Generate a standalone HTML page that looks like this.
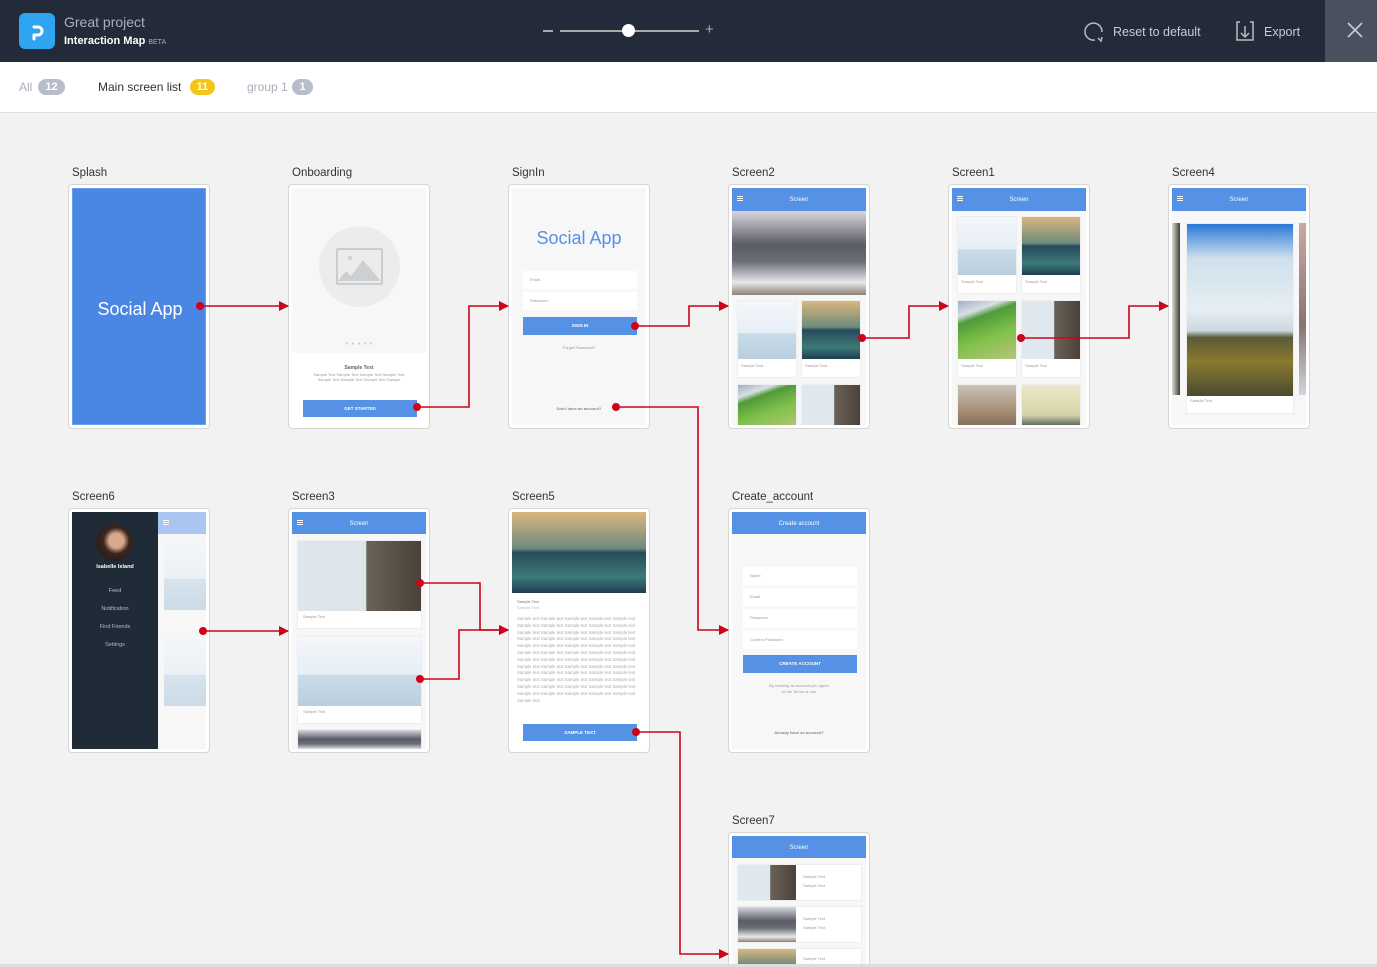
<!DOCTYPE html>
<html style="width:1377px;height:967px;overflow:hidden"><head><meta charset="utf-8"><style>
*{box-sizing:border-box;margin:0;padding:0}
body{width:1377px;height:967px;overflow:hidden;background:#f2f2f2;font-family:"Liberation Sans",sans-serif;position:relative}
.hdr{position:absolute;left:0;top:0;width:1377px;height:62px;background:#232a3a}
.tabs{position:absolute;left:0;top:62px;width:1377px;height:51px;background:#fff;border-bottom:1px solid #ddd}
.a{position:absolute}
.lbl{position:absolute;font-size:11.5px;color:#333}
.card{position:absolute;width:142px;height:245px;background:#fff;border:1px solid #d6d6d6;border-radius:4px;overflow:hidden}
.in{position:absolute;left:3px;top:3px;width:134px;height:237px;background:#f7f7f7;overflow:hidden}
.bar{position:absolute;left:0;top:0;width:134px;height:22px;background:#5591e4;color:#fff;font-size:6px;text-align:center;line-height:24px}
.ham{position:absolute;left:5px;top:8px;width:6px;height:1px;background:#fff;box-shadow:0 2px 0 #fff,0 4px 0 #fff}
.t{position:absolute;font-size:4px;color:#999}
.btn{position:absolute;background:#5591e4;color:#fff;font-size:4.5px;font-weight:bold;text-align:center}
.fld{position:absolute;background:#fff;font-size:4px;color:#999;padding-left:7px}
.tile{position:absolute;background:#fff;border:1px solid #eee}
.sky{background:linear-gradient(#f4f7fa,#e6eef6 55%,#c9dbe9 56%,#b9cfe0)}
.sea{background:linear-gradient(#d9b77f,#6e8a7c 45%,#274b5a 50%,#3d7a78 80%,#1d3d52)}
.hill{background:linear-gradient(160deg,#9fb0c4 0%,#d9dfe4 20%,#4f9a3a 30%,#7fc14a 60%,#b8c47a)}
.city{background:linear-gradient(#d9d6de 0%,#5a5c66 40%,#6b6e78 60%,#e8e8ea 85%,#8e8276)}
.pier{background:linear-gradient(90deg,#dfe8ef 55%,#6a6258 56%,#4a4238)}
</style></head><body>
<div class="hdr">
 <div class="a" style="left:19px;top:13px;width:36px;height:36px;border-radius:6px;background:#2fa4f0"></div>
 <svg class="a" style="left:19px;top:13px" width="36" height="36"><path d="M15 26 L15 24 M15 14 h4 a4 4 0 0 1 0 8 h-4" stroke="#fff" stroke-width="3" fill="none" stroke-linecap="round"/></svg>
 <div class="a" style="left:64px;top:14px;font-size:14px;color:#a9afbd">Great project</div>
 <div class="a" style="left:64px;top:35px;font-size:11px;color:#fff;font-weight:bold">Interaction Map <span style="font-size:7px;font-weight:normal;color:#a9afbd">BETA</span></div>
 <div class="a" style="left:543px;top:30px;width:10px;height:1.5px;background:#aaa"></div>
 <div class="a" style="left:560px;top:30px;width:139px;height:1.5px;background:#aaa"></div>
 <div class="a" style="left:622px;top:24px;width:13px;height:13px;border-radius:50%;background:#fff"></div>
 <div class="a" style="left:705px;top:21px;font-size:15px;color:#aaa">+</div>
 <svg class="a" style="left:1083px;top:21px" width="22" height="22"><path d="M12 19 A8.5 8.5 0 1 1 19 11" stroke="#bbb" stroke-width="1.5" fill="none"/><path d="M15 17 l3 3 l1 -4" stroke="#bbb" stroke-width="1.5" fill="none"/></svg>
 <div class="a" style="left:1113px;top:25px;font-size:12.5px;color:#c9ccd4">Reset to default</div>
 <svg class="a" style="left:1234px;top:20px" width="22" height="24"><path d="M6 2 H3 v18 h16 V2 h-3 M11 6 v11 M7 13 l4 4 l4 -4" stroke="#bbb" stroke-width="1.5" fill="none"/></svg>
 <div class="a" style="left:1264px;top:25px;font-size:12.5px;color:#c9ccd4">Export</div>
 <div class="a" style="left:1325px;top:0;width:52px;height:62px;background:#4a505d"></div>
 <svg class="a" style="left:1344px;top:19px" width="24" height="24"><path d="M4 4 L18 18 M18 4 L4 18" stroke="#c9ccd4" stroke-width="1.6"/></svg>
</div>
<div class="tabs">
 <div class="a" style="left:19px;top:18px;font-size:12px;color:#a9afbd">All</div>
 <div class="a" style="left:38px;top:17px;width:27px;height:16px;border-radius:8px;background:#b8bccb;color:#fff;font-size:11px;font-weight:bold;text-align:center;line-height:16px">12</div>
 <div class="a" style="left:98px;top:18px;font-size:12px;color:#333">Main screen list</div>
 <div class="a" style="left:190px;top:17px;width:25px;height:16px;border-radius:8px;background:#f5c518;color:#fff;font-size:11px;font-weight:bold;text-align:center;line-height:16px">11</div>
 <div class="a" style="left:247px;top:18px;font-size:12px;color:#a9afbd">group 1</div>
 <div class="a" style="left:292px;top:17px;width:21px;height:16px;border-radius:8px;background:#b8bccb;color:#fff;font-size:11px;font-weight:bold;text-align:center;line-height:16px">1</div>
</div>

<div class="lbl" style="left:72px;top:167px">Splash</div>
<div class="card" style="left:68px;top:184px"><div class="in" style="background:#4a87e4;border:1px solid #6aa0ef"><div class="a" style="left:0;top:110px;width:134px;text-align:center;color:#fff;font-size:18px">Social App</div></div></div>

<div class="lbl" style="left:292px;top:167px">Onboarding</div>
<div class="card" style="left:288px;top:184px"><div class="in" style="background:#fff">
 <div class="a" style="left:0;top:0;width:134px;height:165px;background:#f7f7f7"></div>
 <div class="a" style="left:27px;top:38px;width:81px;height:81px;border-radius:50%;background:#ececec"></div>
 <div class="a" style="left:44px;top:60px;width:47px;height:37px;border:2px solid #ccc;border-radius:2px"></div>
 <svg class="a" style="left:46px;top:62px" width="43" height="33"><path d="M0 31 L8 21 L13 26 L25 10 L43 31Z" fill="#cdd0d3"/><circle cx="12" cy="8" r="2" fill="#cdd0d3"/></svg>
 <div class="a" style="left:52px;top:154px;width:32px;height:3px;background:radial-gradient(circle,#ccc 1px,transparent 1.3px) 0 0/6px 3px"></div>
 <div class="t" style="left:0;top:177px;width:134px;text-align:center;font-weight:bold;color:#666;font-size:5px">Sample Text</div>
 <div class="t" style="left:20px;top:184px;width:94px;text-align:center;line-height:5px">Sample Text Sample Text Sample Text Sample Text Sample Text Sample Text Sample Text Sample</div>
 <div class="btn" style="left:11px;top:212px;width:114px;height:17px;line-height:17px">GET STARTED</div>
</div></div>

<div class="lbl" style="left:512px;top:167px">SignIn</div>
<div class="card" style="left:508px;top:184px"><div class="in">
 <div class="a" style="left:0;top:40px;width:134px;text-align:center;color:#5591e4;font-size:18px">Social App</div>
 <div class="fld" style="left:11px;top:83px;width:114px;height:18px;line-height:18px">Email</div>
 <div class="fld" style="left:11px;top:104px;width:114px;height:18px;line-height:18px">Password</div>
 <div class="btn" style="left:11px;top:129px;width:114px;height:18px;line-height:18px">SIGN IN</div>
 <div class="t" style="left:0;top:157px;width:134px;text-align:center">Forgot Password?</div>
 <div class="t" style="left:0;top:218px;width:134px;text-align:center;font-weight:bold;color:#888">Don't have an account?</div>
</div></div>

<div class="lbl" style="left:732px;top:167px">Screen2</div>
<div class="card" style="left:728px;top:184px"><div class="in">
 <div class="bar" style="height:23px"><div class="ham"></div>Screen</div>
 <div class="a city" style="left:0;top:23px;width:134px;height:84px"></div>
 <div class="tile" style="left:5px;top:112px;width:60px;height:78px"><div class="a sky" style="left:0;top:0;width:58px;height:58px"></div><div class="t" style="left:3px;top:62px">Sample Text</div></div>
 <div class="tile" style="left:69px;top:112px;width:60px;height:78px"><div class="a sea" style="left:0;top:0;width:58px;height:58px"></div><div class="t" style="left:3px;top:62px">Sample Text</div></div>
 <div class="tile hill" style="left:5px;top:196px;width:60px;height:45px"></div>
 <div class="tile pier" style="left:69px;top:196px;width:60px;height:45px"></div>
</div></div>

<div class="lbl" style="left:952px;top:167px">Screen1</div>
<div class="card" style="left:948px;top:184px"><div class="in">
 <div class="bar" style="height:23px"><div class="ham"></div>Screen</div>
 <div class="tile" style="left:5px;top:28px;width:60px;height:78px"><div class="a sky" style="left:0;top:0;width:58px;height:58px"></div><div class="t" style="left:3px;top:62px">Sample Text</div></div>
 <div class="tile" style="left:69px;top:28px;width:60px;height:78px"><div class="a sea" style="left:0;top:0;width:58px;height:58px"></div><div class="t" style="left:3px;top:62px">Sample Text</div></div>
 <div class="tile" style="left:5px;top:112px;width:60px;height:78px"><div class="a hill" style="left:0;top:0;width:58px;height:58px"></div><div class="t" style="left:3px;top:62px">Sample Text</div></div>
 <div class="tile" style="left:69px;top:112px;width:60px;height:78px"><div class="a pier" style="left:0;top:0;width:58px;height:58px"></div><div class="t" style="left:3px;top:62px">Sample Text</div></div>
 <div class="tile" style="left:5px;top:196px;width:60px;height:45px;background:linear-gradient(#c9c3b8,#a88e74 60%,#7a6a5a)"></div>
 <div class="tile" style="left:69px;top:196px;width:60px;height:45px;background:linear-gradient(#ece8c8,#d6d3a8 70%,#3d4b4a)"></div>
</div></div>

<div class="lbl" style="left:1172px;top:167px">Screen4</div>
<div class="card" style="left:1168px;top:184px"><div class="in">
 <div class="bar" style="height:23px"><div class="ham"></div>Screen</div>
 <div class="a" style="left:0;top:35px;width:8px;height:172px;background:linear-gradient(90deg,#ddd,#3a3f2e)"></div>
 <div class="tile" style="left:14px;top:35px;width:108px;height:191px"><div class="a" style="left:0;top:0;width:106px;height:172px;background:linear-gradient(#2a78d8 0%,#cfe0ec 20%,#e6eef3 50%,#cbd9e0 62%,#5a5a38 66%,#8a7a30 80%,#4a4a30)"></div><div class="t" style="left:3px;top:174px">Sample Text</div></div>
 <div class="a" style="left:127px;top:35px;width:7px;height:172px;background:linear-gradient(#c9a9a0,#8a7470 60%,#cfd6df)"></div>
</div></div>

<div class="lbl" style="left:72px;top:491px">Screen6</div>
<div class="card" style="left:68px;top:508px"><div class="in">
 <div class="a" style="left:86px;top:0;width:48px;height:22px;background:#a9c6f0"><div class="ham"></div></div>
 <div class="a sky" style="left:92px;top:28px;width:42px;height:70px;opacity:.7"></div>
 <div class="a sky" style="left:92px;top:124px;width:42px;height:70px;opacity:.7"></div>
 <div class="a" style="left:0;top:0;width:86px;height:237px;background:#202b38"></div>
 <div class="a" style="left:24px;top:12px;width:37px;height:37px;border-radius:50%;background:radial-gradient(circle at 55% 45%,#d9a88a 25%,#3a2620 45%,#1a1414)"></div>
 <div class="a" style="left:0;top:52px;width:86px;text-align:center;color:#fff;font-size:5.5px;font-weight:bold">Isabelle Island</div>
 <div class="a" style="left:0;top:70px;width:86px;text-align:center;color:#bbb;font-size:5.5px;line-height:18px">Feed<br>Notification<br>Find Friends<br>Settings</div>
</div></div>

<div class="lbl" style="left:292px;top:491px">Screen3</div>
<div class="card" style="left:288px;top:508px"><div class="in">
 <div class="bar"><div class="ham"></div>Screen</div>
 <div class="tile" style="left:5px;top:28px;width:125px;height:89px"><div class="a" style="left:0;top:0;width:123px;height:70px;background:linear-gradient(90deg,#dfe6eb 55%,#6a6258 56%,#4a4238)"></div><div class="t" style="left:5px;top:73px">Sample Text</div></div>
 <div class="tile" style="left:5px;top:123px;width:125px;height:89px"><div class="a sky" style="left:0;top:0;width:123px;height:70px"></div><div class="t" style="left:5px;top:73px">Sample Text</div></div>
 <div class="tile city" style="left:5px;top:217px;width:125px;height:25px"></div>
</div></div>

<div class="lbl" style="left:512px;top:491px">Screen5</div>
<div class="card" style="left:508px;top:508px"><div class="in" style="background:#fff">
 <div class="a sea" style="left:0;top:0;width:134px;height:81px"></div>
 <div class="t" style="left:5px;top:87px;color:#777">Sample Text</div>
 <div class="t" style="left:5px;top:93px;color:#bbb">Sample Text</div>
 <div class="t" style="left:5px;top:104px;width:120px;line-height:6.8px;color:#aaa;font-size:4.3px">Sample text Sample text Sample text Sample text Sample text Sample text Sample text Sample text Sample text Sample text Sample text Sample text Sample text Sample text Sample text Sample text Sample text Sample text Sample text Sample text Sample text Sample text Sample text Sample text Sample text Sample text Sample text Sample text Sample text Sample text Sample text Sample text Sample text Sample text Sample text Sample text Sample text Sample text Sample text Sample text Sample text Sample text Sample text Sample text Sample text Sample text Sample text Sample text Sample text Sample text Sample text Sample text Sample text Sample text Sample text Sample text Sample text Sample text Sample text Sample text Sample text</div>
 <div class="btn" style="left:11px;top:212px;width:114px;height:17px;line-height:17px">SAMPLE TEXT</div>
</div></div>

<div class="lbl" style="left:732px;top:491px">Create_account</div>
<div class="card" style="left:728px;top:508px"><div class="in">
 <div class="bar">Create account</div>
 <div class="fld" style="left:11px;top:55px;width:114px;height:18px;line-height:18px">Name</div>
 <div class="fld" style="left:11px;top:76px;width:114px;height:18px;line-height:18px">Email</div>
 <div class="fld" style="left:11px;top:97px;width:114px;height:18px;line-height:18px">Password</div>
 <div class="fld" style="left:11px;top:119px;width:114px;height:18px;line-height:18px">Confirm Password</div>
 <div class="btn" style="left:11px;top:143px;width:114px;height:18px;line-height:18px">CREATE ACCOUNT</div>
 <div class="t" style="left:0;top:171px;width:134px;text-align:center;line-height:6px">By creating an account you agree<br>to the Terms of use</div>
 <div class="t" style="left:0;top:218px;width:134px;text-align:center;font-weight:bold;color:#888">Already have an account?</div>
</div></div>

<div class="lbl" style="left:732px;top:815px">Screen7</div>
<div class="card" style="left:728px;top:832px;height:140px"><div class="in" style="height:137px">
 <div class="bar">Screen</div>
 <div class="tile" style="left:5px;top:28px;width:125px;height:37px"><div class="a pier" style="left:0;top:0;width:58px;height:35px"></div><div class="t" style="left:65px;top:7px;line-height:9px">Sample Text<br>Sample Text</div></div>
 <div class="tile" style="left:5px;top:70px;width:125px;height:37px"><div class="a city" style="left:0;top:0;width:58px;height:35px"></div><div class="t" style="left:65px;top:7px;line-height:9px">Sample Text<br>Sample Text</div></div>
 <div class="tile" style="left:5px;top:112px;width:125px;height:37px"><div class="a sea" style="left:0;top:0;width:58px;height:35px"></div><div class="t" style="left:65px;top:7px">Sample Text</div></div>
</div></div>
<div class="a" style="left:0;top:964px;width:1377px;height:3px;background:#ddd"></div>

<svg class="a" style="left:0;top:0" width="1377" height="967">
<defs><marker id="ar" markerWidth="10" markerHeight="10" refX="9" refY="5" orient="auto" markerUnits="userSpaceOnUse"><path d="M0 0 L10 5 L0 10Z" fill="#d0021b"/></marker></defs>
<g stroke="#d0021b" stroke-width="1.6" fill="none" marker-end="url(#ar)">
<path d="M200 306 H288"/>
<path d="M417 407 H469 V306 H508"/>
<path d="M635 326 H689 V306 H728"/>
<path d="M616 407 H698 V630 H728"/>
<path d="M862 338 H909 V306 H948"/>
<path d="M1021 338 H1129 V306 H1168"/>
<path d="M203 631 H288"/>
<path d="M420 583 H480 V630 H508"/>
<path d="M420 679 H459 V630 H508"/>
<path d="M636 732 H680 V954 H728"/>
</g>
<g fill="#d0021b">
<circle cx="200" cy="306" r="4"/><circle cx="417" cy="407" r="4"/><circle cx="635" cy="326" r="4"/><circle cx="616" cy="407" r="4"/><circle cx="862" cy="338" r="4"/><circle cx="1021" cy="338" r="4"/><circle cx="203" cy="631" r="4"/><circle cx="420" cy="583" r="4"/><circle cx="420" cy="679" r="4"/><circle cx="636" cy="732" r="4"/>
</g>
</svg>
</body></html>
